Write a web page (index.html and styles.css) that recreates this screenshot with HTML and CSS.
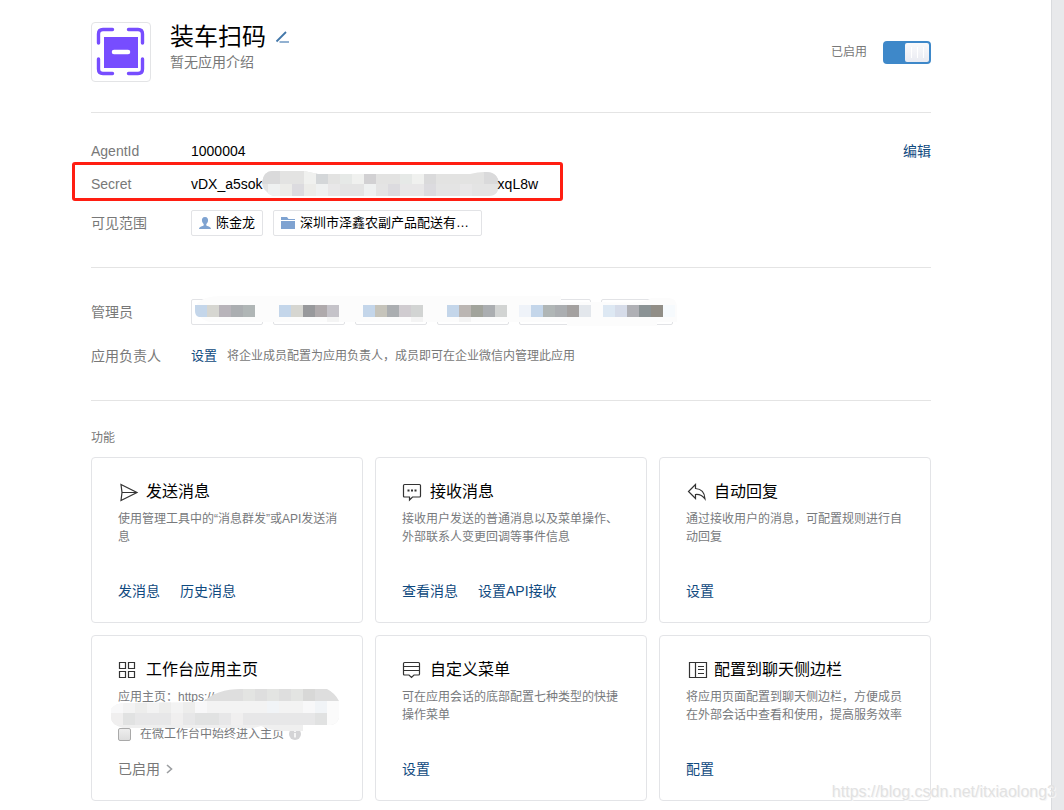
FILE: index.html
```html
<!DOCTYPE html>
<html lang="zh-CN">
<head>
<meta charset="utf-8">
<meta name="viewport" content="width=device-width, initial-scale=1">
<title>装车扫码</title>
<link rel="stylesheet" href="styles.css">
</head>
<body>
<main class="page">
  <header class="app-head">
    <svg class="app-logo" viewBox="0 0 58 58" aria-hidden="true">
      <g fill="none" stroke="#774dff" stroke-width="3.400" stroke-linecap="round">
        <path d="M6.500 20V11q0-4.500 4.500-4.500h9.500M36.500 6.500H46q4.500 0 4.500 4.500v9M50.500 36v10q0 4.500-4.500 4.500h-9.500M20.500 50.500H11q-4.500 0-4.500-4.500V36"/>
      </g>
      <path d="M12 14h34v31H12z" fill="#774dff"/>
      <path d="M22 29h14" stroke="#fff" stroke-width="4.500" stroke-linecap="round"/>
    </svg>
    <div class="app-info">
      <div class="app-title">
        <h1>装车扫码</h1>
        <button class="edit-name" type="button" aria-label="修改名称">
          <svg width="14" height="14" viewBox="0 0 14 14" aria-hidden="true"><path d="M1.500 11.500 11 2" stroke="#4277a9" stroke-width="1.800"/><path d="M4.500 12H14" stroke="#86a9cc" stroke-width="1.800"/></svg>
        </button>
      </div>
      <p class="app-desc">暂无应用介绍</p>
    </div>
    <label class="app-switch">已启用<input class="switch" type="checkbox" role="switch" checked></label>
  </header>

  <section class="block base">
    <div class="row">
      <span class="label">AgentId</span><span class="value">1000004</span>
      <a class="link edit" href="#">编辑</a>
    </div>
    <div class="row marked">
      <span class="label">Secret</span>
      <span class="value secret">vDX_a5sok<svg class="secret-mask" viewBox="0 0 237 26" aria-hidden="true">
        <clipPath id="m1"><path d="M10 0h32l14 3h152q8-2 14-2h2q12 0 13 12 0 12-10 12H14Q8 25 5 21 0 17 0 11 2 0 10 0z"/></clipPath>
        <g clip-path="url(#m1)">
          <path d="M0 0h237v13H0z" fill="#e3e3e2"/><path d="M0 13h237v13H0z" fill="#e4e4e4"/>
          <path d="M0 0h18v13H0zM162 0h12v13h-12zM222 0h15v13h-15z" fill="#dadadb"/>
          <path d="M42 0h12v13H42zM90 0h12v13H90zM150 0h12v13h-12z" fill="#f0f1ef"/>
          <path d="M54 0h12v13H54z" fill="#d4d7d9"/><path d="M102 0h12v13h-12z" fill="#d2d1d3"/>
          <path d="M78 0h12v13H78zM138 0h12v13h-12z" fill="#e6e9e7"/>
          <path d="M6 13h12v13H6zM102 13h12v13h-12zM54 13h12v13H54z" fill="#eff1f1"/>
          <path d="M18 13h12v13H18zM42 13h12v13H42z" fill="#ecece9"/>
          <path d="M30 13h12v13H30zM126 13h12v13h-12zM162 13h12v13h-12z" fill="#dcdbdf"/>
          <path d="M66 13h12v13H66zM138 13h24v13h-24zM198 13h12v13h-12z" fill="#e8e7e8"/>
        </g></svg>xqL8w</span>
    </div>
    <div class="row range">
      <span class="label">可见范围</span>
      <span class="chip"><svg width="12" height="13" viewBox="0 0 12 13" aria-hidden="true"><path d="M6 0C3.500 0 2.700 2 3 4c.2 1.500 1 2.400 1.700 3v1.300C4 9.500 0 9.500 0 12h12c0-2.500-4-2.500-4.700-3.700V7C8 6.400 8.800 5.500 9 4c.3-2-.5-4-3-4z" fill="#7fa3d1"/></svg>陈金龙</span>
      <span class="chip wide"><svg width="14" height="13" viewBox="0 0 14 13" aria-hidden="true"><path d="M0 0h6l1.500 2H14v1H0zM0 4h14v8H0z" fill="#7fa3d1"/></svg>深圳市泽鑫农副产品配送有…</span>
    </div>
  </section>

  <section class="block admins">
    <div class="row">
      <span class="label">管理员</span>
      <div class="admin-list">
        <span class="chip"></span><span class="chip"></span><span class="chip"></span><span class="chip"></span><span class="chip"></span><span class="chip"></span>
        <svg class="admin-mask" width="490" height="32" viewBox="0 0 490 32" aria-hidden="true">
          <path d="M6 8Q12 0 30 0h340v6h40q45 2 50-4h18q8 0 8 10v14h-20v4h-90v-4H20Q5 24 6 8z" fill="#fcfcfc"/>
          <path d="M4 9h12v12H8q-4-1-4-6zM88 9h12v12H88zM172 9h12v12h-12zM256 9h12v12h-12zM340 9h12v12h-12z" fill="#c4d6ea"/>
          <path d="M16 9h12v12H16zM100 9h12v12h-12z" fill="#d6d6d1"/>
          <path d="M28 9h12v12H28z" fill="#b8b4ba"/>
          <path d="M40 9h12v12H40zM196 9h12v12h-12zM292 9h12v12h-12zM364 9h12v12h-12z" fill="#abaeb1"/>
          <path d="M52 9h12v12H52zM352 9h12v12h-12z" fill="#b0b6b6"/>
          <path d="M112 9h12v12h-12z" fill="#98999c"/><path d="M124 9h12v12h-12z" fill="#afaaac"/>
          <path d="M136 9h12v12h-12z" fill="#c5c3c9"/><path d="M184 9h12v12h-12z" fill="#c6c4bb"/>
          <path d="M208 9h12v12h-12z" fill="#d0ccd0"/><path d="M220 9h12v12h-12zM304 9h12v12h-12z" fill="#d2d4d3"/>
          <path d="M268 9h12v12h-12z" fill="#bbb6b3"/><path d="M280 9h12v12h-12z" fill="#a2a49c"/>
          <path d="M328 9h12v12h-12z" fill="#eff3f9"/><path d="M376 9h12v12h-12z" fill="#a4a1a0"/>
          <path d="M388 9h12v12h-12z" fill="#e3e7ec"/><path d="M412 9h12v12h-12z" fill="#dde8f3"/>
          <path d="M424 9h12v12h-12z" fill="#d6dce9"/><path d="M436 9h12v12h-12z" fill="#afb0b5"/>
          <path d="M448 9h12v12h-12z" fill="#8b9395"/><path d="M460 9h12v12h-12z" fill="#918e87"/>
          <path d="M472 9h12v12h-12z" fill="#f6fafd"/>
          <path d="M136 21h12v5h-12zM220 21h12v5h-12zM268 21h12v5h-12z" fill="#f4f4f4"/>
        </svg>
      </div>
    </div>
    <div class="row owner">
      <span class="label">应用负责人</span>
      <a class="link small" href="#">设置</a>
      <span class="hint">将企业成员配置为应用负责人，成员即可在企业微信内管理此应用</span>
    </div>
  </section>

  <section class="features">
    <h2>功能</h2>
    <div class="cards">
      <article class="card">
        <h3><svg class="icon" viewBox="0 0 20 20" aria-hidden="true"><path d="M3 3.500 19 11.500 3 19.500 4 11.500zM4 11.500h15"/></svg>发送消息</h3>
        <p>使用管理工具中的“消息群发”或API发送消息</p>
        <div class="actions"><a class="link" href="#">发消息</a><a class="link" href="#">历史消息</a></div>
      </article>
      <article class="card">
        <h3><svg class="icon" viewBox="0 0 20 20" aria-hidden="true"><path d="M2.500 3.500h15q1 0 1 1v10.500q0 1-1 1H10.500L7.500 19v-3h-5q-1 0-1-1V4.500q0-1 1-1z"/><path d="M5.500 9.500h2m1.500 0h2m1.500 0h2" stroke-width="2"/></svg>接收消息</h3>
        <p>接收用户发送的普通消息以及菜单操作、外部联系人变更回调等事件信息</p>
        <div class="actions"><a class="link" href="#">查看消息</a><a class="link" href="#">设置API接收</a></div>
      </article>
      <article class="card">
        <h3><svg class="icon" viewBox="0 0 20 20" aria-hidden="true"><path d="M9.500 3.500 2.500 10.500l7 7V13.500q6-.5 9.500 4.500-.5-10-9.500-10.500z"/></svg>自动回复</h3>
        <p>通过接收用户的消息，可配置规则进行自动回复</p>
        <div class="actions"><a class="link" href="#">设置</a></div>
      </article>
      <article class="card home">
        <h3><svg class="icon" viewBox="0 0 20 20" aria-hidden="true"><path d="M1.500 3.500h6v6h-6zM10.500 3.500h6v6h-6zM1.500 12.500h6v6h-6zM10.500 12.500h6v6h-6z"/></svg>工作台应用主页</h3>
        <p>应用主页：https://r</p>
        <div class="always">
          <label><input type="checkbox">在微工作台中始终进入主页</label>
          <svg width="12" height="12" viewBox="0 0 12 12" aria-hidden="true"><circle cx="6" cy="6" r="6" fill="#d4d4d6"/><path d="M6 2.500v1.500M6 5v4.500" stroke="#fff" stroke-width="1.500"/></svg>
        </div>
        <div class="actions"><a class="link muted" href="#">已启用<svg width="7" height="10" viewBox="0 0 7 10" aria-hidden="true"><path d="M1 1l4.500 4L1 9" fill="none" stroke="#9c9ea1" stroke-width="1.600"/></svg></a></div>
        <svg class="home-mask" width="228" height="43" viewBox="0 0 228 43" aria-hidden="true">
          <clipPath id="m2"><path d="M92 13Q106 0 130 0h86q8 4 12 12v17q-2 6-8 7H192v6H170q-12-1-20-5-8 3-20 2H12Q0 36 0 28V20q4-6 14-6z"/></clipPath>
          <g clip-path="url(#m2)">
            <path d="M90 0h138v12H90z" fill="#dedede"/><path d="M0 12h228v12H0z" fill="#f3f3f3"/>
            <path d="M0 24h228v12H0z" fill="#e7e7e8"/><path d="M0 36h228v7H0z" fill="#efefef"/>
            <path d="M156 0h12v12h-12zM180 0h12v12h-12zM132 0h12v12h-12z" fill="#e3e4e2"/>
            <path d="M192 0h12v12h-12z" fill="#d8d8d7"/>
            <path d="M24 12h12v12H24zM48 12h12v12H48zM72 12h12v12H72z" fill="#ededec"/>
            <path d="M84 12h12v12H84zM192 12h12v12h-12zM0 12h12v12H0z" fill="#f8f8f9"/>
            <path d="M156 12h12v12h-12zM204 12h12v12h-12z" fill="#f1f4f7"/>
            <path d="M0 24h12v12H0zM60 24h12v12H60zM120 24h12v12h-12z" fill="#f0efef"/>
            <path d="M12 24h12v12H12zM84 24h24v12H84zM204 24h12v12h-12z" fill="#e1e2e2"/>
            <path d="M216 12h12v24h-12z" fill="#fbfbfb"/>
          </g>
        </svg>
      </article>
      <article class="card">
        <h3><svg class="icon" viewBox="0 0 20 20" aria-hidden="true"><path d="M2.500 3.500h14q1 0 1 1v10.500q0 1-1 1H12L9.500 18.500 7 16H2.500q-1 0-1-1V4.500q0-1 1-1zM1.500 7.500h16M1.500 11.500h16"/></svg>自定义菜单</h3>
        <p>可在应用会话的底部配置七种类型的快捷操作菜单</p>
        <div class="actions"><a class="link" href="#">设置</a></div>
      </article>
      <article class="card">
        <h3><svg class="icon" viewBox="0 0 20 20" aria-hidden="true"><path d="M3.500 3.500h17v15h-17zM9.500 3.500v15M12 7.500h6M12 10.500h6M12 14.500h6"/></svg>配置到聊天侧边栏</h3>
        <p>将应用页面配置到聊天侧边栏，方便成员在外部会话中查看和使用，提高服务效率</p>
        <div class="actions"><a class="link" href="#">配置</a></div>
      </article>
    </div>
  </section>
</main>
<div class="watermark">https://blog.csdn.net/itxiaolong3</div>
</body>
</html>
```

FILE: styles.css
```css
*, *::before, *::after { box-sizing: border-box; }

body {
  margin: 0;
  position: relative;
  background: #e8e9eb;
  color: #000;
  font: 14px/20px "Liberation Sans", "Noto Sans CJK SC", sans-serif;
}

h1, h2, h3, p { margin: 0; font-weight: 400; }
svg { flex: none; }

.page {
  min-height: 100vh;
  margin-right: 12px;
  padding: 22px 120px 9px 91px;
  background: #fff;
  border-right: 1px solid #d9dbde;
}

.app-head {
  display: flex;
  align-items: center;
  padding-bottom: 30px;
  border-bottom: 1px solid #e4e4e4;
}
.app-logo {
  width: 60px;
  height: 60px;
  border: 1px solid #e3e4e6;
  border-radius: 4px;
}
.app-info { flex: 1; margin-left: 19px; padding-bottom: 10px; }
.app-title { display: flex; align-items: center; gap: 9px; }
.app-title h1 { font-size: 24px; line-height: 30px; }
.edit-name { display: flex; padding: 0; border: 0; background: none; }
.app-desc { color: #787878; }
.app-switch {
  display: flex;
  align-items: center;
  gap: 16px;
  color: #787878;
  font-size: 12px;
}

.switch {
  appearance: none;
  display: flex;
  justify-content: flex-end;
  width: 48px;
  height: 23px;
  margin: 0;
  padding: 2px;
  border-radius: 4px;
  background: #3e88c9;
}
.switch::before {
  content: "";
  width: 24px;
  border-radius: 2px;
  background:
    linear-gradient(#fff, #fff) 6px 4px / 1px 11px no-repeat,
    linear-gradient(#fff, #fff) 12px 4px / 1px 11px no-repeat,
    linear-gradient(#fff, #fff) 18px 4px / 1px 11px no-repeat,
    linear-gradient(#fafafc, #e9ebf2);
}
.switch:not(:checked) { justify-content: flex-start; background: #c4c7cc; }

.block { border-bottom: 1px solid #e4e4e4; }
.base { padding: 21px 0 31px; }
.admins { padding: 31px 0 34px; }
.row { display: flex; align-items: center; }
.base .row { min-height: 33px; }
.base .range { min-height: 26px; margin-top: 10px; gap: 10px; }
.label { flex: 0 0 100px; color: #787878; }
.range .label { flex-basis: 90px; }
.edit { margin-left: auto; }

.marked { position: relative; }
.marked::after {
  content: "";
  position: absolute;
  top: -5px;
  bottom: -1px;
  left: -19px;
  width: 491px;
  border: 3px solid #ff1e12;
  border-radius: 3px;
}
.secret { display: flex; align-items: center; }
.secret-mask { width: 237px; height: 26px; margin: 0 -1px; }

.chip {
  display: flex;
  align-items: center;
  gap: 5px;
  min-width: 72px;
  height: 26px;
  padding: 0 7px;
  border: 1px solid #e2e3e6;
  border-radius: 2px;
  font-size: 13px;
}
.chip.wide { min-width: 209px; }

.admin-list { position: relative; display: flex; gap: 10px; }
.admin-mask { position: absolute; top: -3px; left: 0; }
.owner { margin-top: 21px; }
.small { font-size: 13px; }
.hint { margin-left: 10px; color: #787878; font-size: 12px; }

.link { color: #0f4a80; text-decoration: none; }
.link.muted { display: flex; align-items: center; gap: 6px; color: #787878; }

.features { padding-top: 27px; }
.features h2 { margin-bottom: 9px; color: #787878; font-size: 12px; line-height: 20px; }
.cards { display: grid; grid-template-columns: repeat(3, 1fr); gap: 12px; }
.card {
  position: relative;
  display: flex;
  flex-direction: column;
  min-height: 166px;
  padding: 21px 23px 21px 26px;
  border: 1px solid #e3e4e7;
  border-radius: 4px;
}
.card h3 {
  display: flex;
  align-items: flex-start;
  gap: 8px;
  margin-bottom: 5px;
  font-size: 16px;
  line-height: 26px;
}
.card p { color: #787a7d; font-size: 12px; line-height: 18px; }
.icon {
  width: 20px;
  height: 20px;
  margin-top: 2px;
  overflow: visible;
  fill: none;
  stroke: #333;
  stroke-width: 1.2;
}
.actions { display: flex; gap: 20px; margin-top: auto; }

.always { display: flex; align-items: center; gap: 5px; margin-top: 19px; }
.always label {
  display: flex;
  align-items: center;
  gap: 9px;
  color: #787a7d;
  font-size: 12px;
  line-height: 18px;
}
.always input {
  appearance: none;
  width: 13px;
  height: 13px;
  margin: 0;
  border: 1px solid #a9a9a9;
  border-radius: 2px;
  background: linear-gradient(#eee, #ddd);
}
.home-mask { position: absolute; top: 53px; left: 19px; }

.watermark {
  position: absolute;
  right: 8px;
  bottom: 8px;
  color: #e2e2e2;
  font-size: 16px;
  text-shadow: 1px 1px 0 #f6f6f6;
}
```
